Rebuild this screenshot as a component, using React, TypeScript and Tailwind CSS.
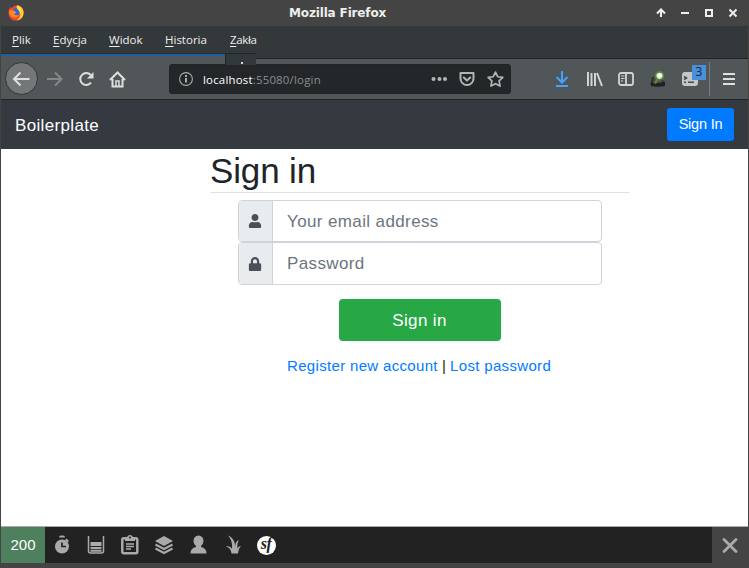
import type { ReactNode } from "react";
import { FaLock, FaUser } from "react-icons/fa";

const menu = [
  { key: "P", rest: "lik", cls: "w-[41px]" },
  { key: "E", rest: "dycja", cls: "w-[56px]" },
  { key: "W", rest: "idok", cls: "w-[56px]" },
  { key: "H", rest: "istoria", cls: "w-[65px]" },
  { key: "Z", rest: "akła", cls: "w-[40px] tracking-[-0.350px]" },
];

function Cell({ className, children }: { className: string; children: ReactNode }) {
  return <div className={`flex shrink-0 items-center justify-center ${className}`}>{children}</div>;
}

function TitleBar() {
  return (
    <div className="flex h-[26px] items-center bg-[#444444]">
      <svg className="ml-[7px] h-4 w-4 shrink-0" viewBox="0 0 16 16">
        <path d="M8 .5c5 0 7.8 3.5 7.6 7.8C15.400 12.800 12 15.800 8 15.800S.5 12.700.5 8.300C.5 5.500 1.300 3.500 2.200 1.700l1 1.700C5 1.500 6.500.5 8 .5Z" fill="#f4442f" />
        <path d="M9 .3c4.500.6 6.700 4 6.600 7.700-.2 4.500-3.300 7-7 7.300 3-2 3.900-4.300 3.700-7C12.100 5 10 3 9 .3Z" fill="#ffcf28" />
        <path d="M5.500 4.500C7 2.500 9.800 2.700 11 5c1.300 2.700.3 5.700-2.500 6.300-2 .3-3.500-.8-3.500-3 0-1.500.2-2.800.5-3.800Z" fill="#2868d8" />
        <path d="M1.200 5.500c1.300-1 3.500-1 4.500.4L8.700 7 7 8.500c-1 .6-.7 1.600.7 1.800 1.500.1 2.300-.5 3.100-.6-.6 2-2 3.300-4.300 3C2.900 12.300.8 9 1.200 5.500Z" fill="#ff8b20" />
        <path d="M9 .3C8 3 9.500 4 10.500 5.200c1.300 1.400 1.600 3 1 4.700C13.800 7.700 13.200 2.300 9 .3Z" fill="#ffe24a" />
      </svg>
      <span className="ml-[265px] w-[101px] whitespace-nowrap font-['DejaVu_Sans',sans-serif] text-[12px] font-bold leading-[26px] tracking-[-0.150px] text-[#eeeeec]">
        Mozilla Firefox
      </span>
      <svg className="ml-[266px] h-[12px] w-[82px] shrink-0" viewBox="0 0 82 12" fill="none" stroke="#eeeeec" strokeWidth="2">
        <path d="M5 10V3M1 6.500 5 2.500l4 4" />
        <path d="M25 6h8" />
        <path d="M50 3h6v6h-6z" />
        <path d="m73.500 2.500 7 7m0-7-7 7" />
      </svg>
    </div>
  );
}

function MenuBar() {
  return (
    <div className="flex h-[27px] bg-[#33393b] pl-[11px] font-['Open_Sans','Noto_Sans',sans-serif] text-[11.500px] leading-[28px] text-[#eeeeec]">
      {menu.map((m) => (
        <span key={m.key} className={`${m.cls} shrink-0 whitespace-nowrap`}>
          <span className="underline underline-offset-2">{m.key}</span>
          {m.rest}
        </span>
      ))}
    </div>
  );
}

function Toolbar() {
  return (
    <div className="relative h-[47px] bg-[#515658]">
      <div className="flex h-[6px]">
        <div className="w-[224px] border-t border-t-[#2a3032]">
          <div className="h-[2px] bg-[#215d9c]" />
        </div>
        <div className="flex-1 border-b border-[#202425] bg-[#33393b]" />
      </div>
      <div className="absolute left-[224px] top-0 h-[12px] w-[31px] border-l border-t border-[#202628] bg-[#33393b]">
        <div className="ml-[15px] mt-[8px] h-[2px] w-[2px] bg-[#d8dad9]" />
      </div>
      <div className="flex h-[41px] items-center border-b border-[#202425]">
        <Cell className="ml-[4px] h-[33px] w-[32px]">
          <svg className="-mt-px h-[33px] w-[33px] shrink-0" viewBox="0 0 33 33" fill="none">
            <circle cx="16.500" cy="16.500" r="16" fill="#737778" stroke="#303638" />
            <path d="M24.500 17H9m6.500-6.500L9 17l6.500 6.500" stroke="#dedfde" strokeWidth="2" />
          </svg>
        </Cell>
        <svg className="ml-[9px] h-4 w-[17px] shrink-0" viewBox="0 0 17 16" fill="none" stroke="#858889" strokeWidth="2">
          <path d="M1 8h14M9 1.500 15.500 8 9 14.500" />
        </svg>
        <svg className="ml-[15px] h-4 w-4 shrink-0" viewBox="0 0 16 16" fill="none" stroke="#dedfde" strokeWidth="2">
          <path d="M13 11.700A6 6 0 1 1 12.700 4" />
          <path d="M15.500 1v6.500H9Z" fill="#dedfde" stroke="none" />
        </svg>
        <svg className="ml-[15px] h-[17px] w-[17px] shrink-0" viewBox="0 0 17 17" fill="none" stroke="#dedfde" strokeWidth="2">
          <path d="M1 9 8.500 1.500 16 9M3.500 8v7.500h10V8" />
          <path d="M7 15v-5h3v5" strokeWidth="1.500" />
        </svg>
        <div className="ml-[43px] flex h-[30px] w-[342px] shrink-0 items-center rounded-[3px] border border-[#202426] bg-[#232729]">
          <svg className="ml-[9px] h-[14px] w-[14px] shrink-0" viewBox="0 0 14 14" fill="none" stroke="#a9abab">
            <circle cx="7" cy="7" r="6.400" strokeWidth="1.100" />
            <path d="M7 6v4.500M7 3v2" strokeWidth="2" />
          </svg>
          <span className="ml-[10px] w-[227px] whitespace-nowrap pt-px font-['Open_Sans','Noto_Sans',sans-serif] text-[11.400px] leading-[28px] tracking-[0.220px] text-[#8b8e8f]">
            <span className="text-white">localhost</span>:55080/login
          </span>
          <svg className="ml-[1px] h-4 w-4 shrink-0" viewBox="0 0 16 16" fill="#b3b5b5">
            <circle cx="2.500" cy="8" r="2" />
            <circle cx="8.500" cy="8" r="2" />
            <circle cx="14" cy="8" r="2" />
          </svg>
          <svg className="ml-[12px] h-4 w-4 shrink-0" viewBox="0 0 16 16" fill="none" stroke="#b3b5b5" strokeWidth="2" strokeLinecap="round" strokeLinejoin="round">
            <path d="M1.500 2h13v5.500a6.500 6.500 0 0 1-13 0Z" />
            <path d="m4.800 6.500 3.200 3 3.200-3" />
          </svg>
          <svg className="ml-[12px] h-[17px] w-[17px] shrink-0" viewBox="0 0 16 16" fill="none" stroke="#b3b5b5" strokeWidth="1.600" strokeLinejoin="round">
            <path d="m8 1 2.100 4.400 4.800.6-3.500 3.300.9 4.900L8 11.900l-4.300 2.300.9-4.900L1.100 6l4.800-.6Z" />
          </svg>
        </div>
        <svg className="ml-[44px] h-[16px] w-[14px] shrink-0" viewBox="0 0 14 16" fill="none" stroke="#45a1ff" strokeWidth="2">
          <path d="M7 0v11M1.500 6 7 11.500 12.500 6M1 15h12" />
        </svg>
        <svg className="ml-[17px] h-[16px] w-[17px] shrink-0" viewBox="0 0 17 16" fill="none" stroke="#d2d4d3" strokeWidth="2">
          <path d="M2 1v14M5.500 2v13M9 2v13M11 2l5 13" />
        </svg>
        <svg className="ml-[15px] h-[16px] w-[16px] shrink-0" viewBox="0 0 16 16" fill="none" stroke="#d2d4d3" strokeWidth="1.800">
          <rect x="1" y="2" width="14" height="12" rx="2" />
          <path d="M8 2v12" />
          <path d="M3 5h3.500M3 7.500h3.500M3 10h2" strokeWidth="1" />
        </svg>
        <svg className="ml-[16px] h-[17px] w-[17px] shrink-0" viewBox="0 0 17 17">
          <path d="M2 6h3v6H1ZM12 7l2 5h-2Z" fill="#2b2e2f" />
          <path d="M4 6h8v6H3Z" fill="#4b5051" />
          <path d="M.5 11.500q7 2 14.500-1v4.500q-7 1.500-14 0Z" fill="#202222" />
          <path d="M7.500 8 5 12.500" stroke="#5b8d34" strokeWidth="2" />
          <circle cx="9.500" cy="4.800" r="4" fill="#d8e7d0" stroke="#578238" strokeWidth="1.700" />
          <circle cx="9.800" cy="4.300" r="2" fill="#f7faf5" />
        </svg>
        <div className="relative ml-[15px] h-[16px] w-[16px] shrink-0">
          <svg className="h-4 w-4" viewBox="0 0 16 16" fill="none" stroke="#454a4c" strokeWidth="1.500">
            <rect x="0" y="1" width="16" height="14" rx="3" fill="#c5c7c7" stroke="none" />
            <path d="m2 5.500 2.500 1.500L2 8.500M6 11.300h6M2 11.300h2" />
          </svg>
          <span className="absolute left-[10px] top-[-6px] h-[15px] w-[14px] bg-[#488fdc] text-center font-['Open_Sans',sans-serif] text-[12px] leading-[14px] text-[#172638]">3</span>
        </div>
        <div className="ml-[11px] h-[34px] w-px bg-[#777b7c]" />
        <svg className="ml-[13px] h-[14px] w-[12px] shrink-0" viewBox="0 0 12 14" stroke="#dedfde" strokeWidth="2">
          <path d="M0 2h12M0 7h12M0 12h12" />
        </svg>
      </div>
    </div>
  );
}

function Field({ icon, placeholder, height }: { icon: ReactNode; placeholder: string; height: string }) {
  return (
    <div className={`flex w-[364px] overflow-hidden rounded-[4px] border border-[#ced4da] ${height}`}>
      <span className="flex w-[34px] shrink-0 items-center justify-center border-r border-[#ced4da] bg-[#e9ecef] pr-px text-[#495057]">{icon}</span>
      <input className="min-w-0 flex-1 px-[14px] pt-px text-[17px] tracking-[0.380px] text-[#495057] outline-none placeholder:text-[#6c757d]" placeholder={placeholder} />
    </div>
  );
}

function ProfilerBar() {
  return (
    <div className="flex h-[37px] items-center border-t border-[#aaaaaa] bg-[#222222]">
      <span className="w-[44px] bg-[#4f805d] text-center text-[15px] leading-[36px] text-white">200</span>
      <svg className="ml-[9px] h-5 w-[18px] shrink-0" viewBox="0 0 18 20" fill="#aaaaaa">
        <path d="M5 2.500q0-2 2-2h2q2 0 2 2Z" />
        <circle cx="8" cy="11.500" r="7" />
        <path d="m12.500 3.500 2.500 2.500-1.500 1.500-2.500-2.500Z" />
        <path d="M8 7.500v4h4" stroke="#222" strokeWidth="1.700" fill="none" />
      </svg>
      <svg className="ml-[15px] h-5 w-[18px] shrink-0" viewBox="0 0 18 20" fill="none" stroke="#aaaaaa" strokeWidth="1.500">
        <path d="M1.500 1v15q0 2 2 2h11q2 0 2-2V1" />
        <path d="M3.500 7h11v4h-11zM3.500 12h11v2h-11zM3.500 14.700h11v2h-11z" fill="#aaaaaa" stroke="none" />
      </svg>
      <svg className="ml-[16px] h-5 w-[18px] shrink-0" viewBox="0 0 18 20" fill="none" stroke="#aaaaaa">
        <rect x="1.300" y="3.300" width="15" height="15" rx="1.500" strokeWidth="2.500" />
        <path d="M4 6V3q0-1 2-1 1-2 3-2t3 2q2 0 2 1v3Z" fill="#aaaaaa" stroke="none" />
        <circle cx="9" cy="2.500" r="1" fill="#222" stroke="none" />
        <path d="M5 9h8M5 11.500h8M5 14h5" strokeWidth="1.500" />
      </svg>
      <svg className="ml-[16px] h-5 w-[18px] shrink-0" viewBox="0 0 18 20" fill="none" stroke="#aaaaaa" strokeWidth="2">
        <path d="m0 6 9-5 9 5-9 5Z" fill="#aaaaaa" stroke="none" />
        <path d="m.5 9.500 8.500 4.500 8.500-4.500M.5 13.500 9 18l8.500-4.500" />
      </svg>
      <svg className="ml-[17px] h-5 w-[17px] shrink-0" viewBox="0 0 17 20" fill="#aaaaaa">
        <ellipse cx="8.500" cy="6" rx="5" ry="5.500" />
        <path d="M6 10h5v2q5.500 1 5.500 6.500H.5Q.5 13 6 12Z" />
      </svg>
      <svg className="ml-[19px] h-5 w-[15px] shrink-0" viewBox="0 0 15 20" fill="#aaaaaa">
        <path d="M2 .5C6.500 2 9.500 7 9 12c.2-3.500 1.300-6 4-7-1.800 3-1.800 6-1.500 8.500.5-1.500 1.500-2.500 3.500-2.500-2 1.500-2.500 4.500-3 7.500H5.500C5 15 3.500 12.500 0 11.500c3-.5 5 .5 6 2.500C6.500 9 5.500 4 2 .5Z" />
      </svg>
      <span className="ml-[16px] flex h-[19px] w-[19px] shrink-0 items-center justify-center rounded-full bg-white pb-[2px] pr-px font-['Liberation_Serif',serif] text-[16px] font-bold italic leading-none tracking-[-0.5px] text-[#222222]">
        sf
      </span>
      <div className="ml-auto flex h-[36px] w-[36px] items-center justify-center bg-[#444444]">
        <svg className="h-[16px] w-[16px]" viewBox="0 0 16 16" stroke="#aaaaaa" strokeWidth="2.800" strokeLinecap="round">
          <path d="m2 2.500 12 12M14 2.500 2 14.500" />
        </svg>
      </div>
    </div>
  );
}

export default function App() {
  return (
    <div className="flex h-[568px] w-[749px] flex-col overflow-hidden border-x border-b-[5px] border-[#444444] bg-white font-['Liberation_Sans',Arial,sans-serif]">
      <TitleBar />
      <MenuBar />
      <Toolbar />
      <header className="flex h-[49px] shrink-0 items-center justify-between bg-[#343a40] px-[14px]">
        <span className="pt-[2px] text-[17px] tracking-[0.350px] text-white">Boilerplate</span>
        <button className="h-[33px] w-[67px] rounded-[3px] bg-[#007bff] pt-px text-[14.500px] tracking-[-0.200px] text-white">Sign In</button>
      </header>
      <main className="flex flex-1 flex-col items-center pl-[91px]">
        <h1 className="h-[44px] w-[420px] border-b border-[#dee2e6] text-[35px] leading-[44px] tracking-[-0.150px] text-[#212529]">Sign in</h1>
        <form className="mt-[7px] flex flex-col items-center">
          <Field height="h-[42px]" icon={<FaUser size={14} />} placeholder="Your email address" />
          <Field height="h-[43px]" icon={<FaLock size={14} />} placeholder="Password" />
          <button type="button" className="mt-[14px] h-[42px] w-[162px] rounded-[4px] bg-[#28a745] pr-px pt-[2px] text-[17px] tracking-[0.350px] text-white">Sign in</button>
        </form>
        <p className="mt-[14px] w-[268px] whitespace-nowrap pl-[1px] text-[15px] leading-[22px] tracking-[0.330px] text-[#212529]">
          <a className="text-[#007bff]">Register new account</a><span className="tracking-[0px]"> | </span><a className="text-[#007bff]">Lost password</a>
        </p>
      </main>
      <ProfilerBar />
    </div>
  );
}
